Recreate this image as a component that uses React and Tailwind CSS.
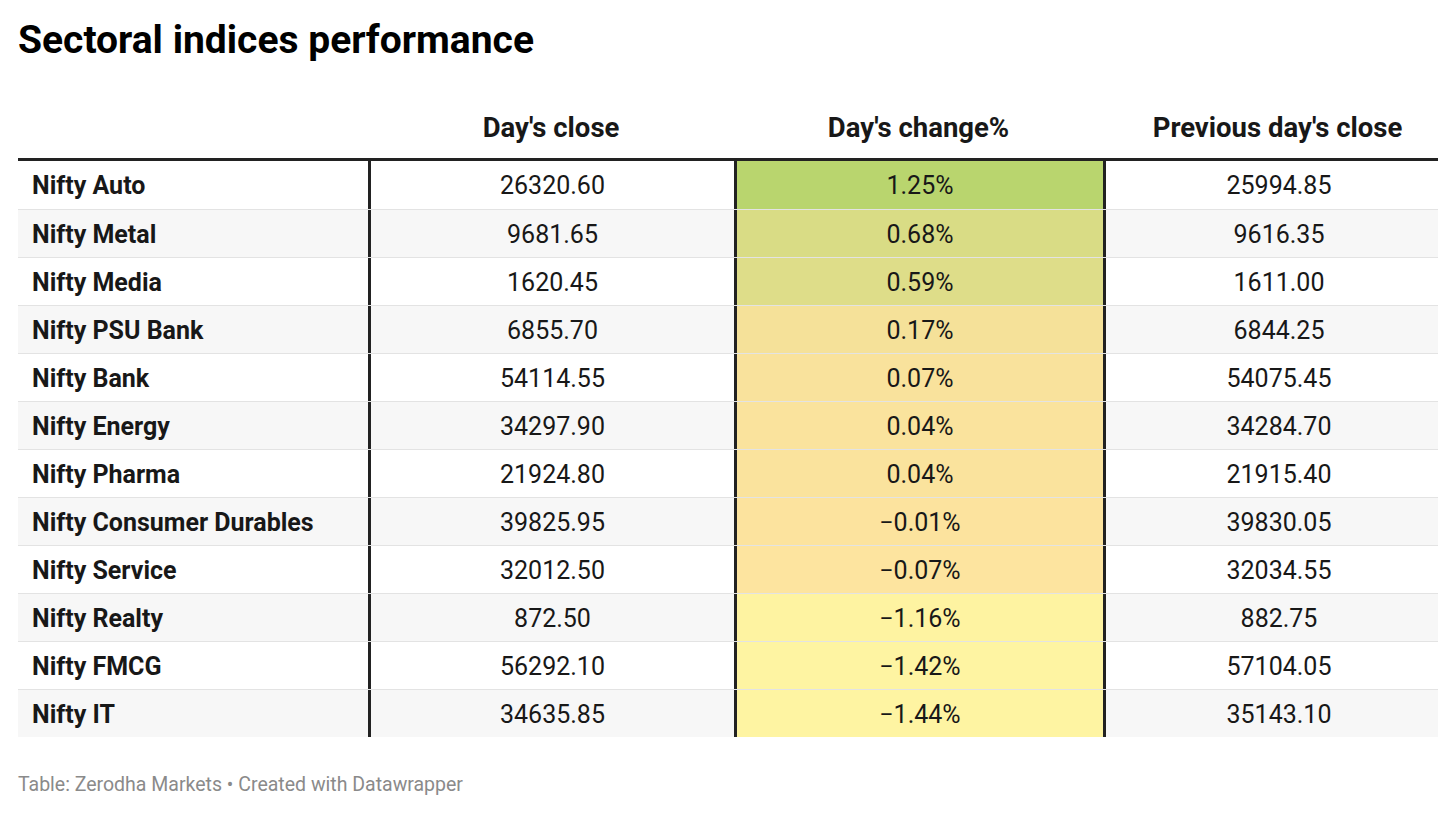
import React from "react";

const rows = [
  { name: "Nifty Auto", close: "26320.60", change: "1.25%", prev: "25994.85", bg: "bg-[#b9d56e]" },
  { name: "Nifty Metal", close: "9681.65", change: "0.68%", prev: "9616.35", bg: "bg-[#d9dc85]" },
  { name: "Nifty Media", close: "1620.45", change: "0.59%", prev: "1611.00", bg: "bg-[#dedd89]" },
  { name: "Nifty PSU Bank", close: "6855.70", change: "0.17%", prev: "6844.25", bg: "bg-[#f5e199]" },
  { name: "Nifty Bank", close: "54114.55", change: "0.07%", prev: "54075.45", bg: "bg-[#f9e29c]" },
  { name: "Nifty Energy", close: "34297.90", change: "0.04%", prev: "34284.70", bg: "bg-[#fae39d]" },
  { name: "Nifty Pharma", close: "21924.80", change: "0.04%", prev: "21915.40", bg: "bg-[#fae39d]" },
  { name: "Nifty Consumer Durables", close: "39825.95", change: "\u22120.01%", prev: "39830.05", bg: "bg-[#fce39e]" },
  { name: "Nifty Service", close: "32012.50", change: "\u22120.07%", prev: "32034.55", bg: "bg-[#fde49f]" },
  { name: "Nifty Realty", close: "872.50", change: "\u22121.16%", prev: "882.75", bg: "bg-[#fef3a1]" },
  { name: "Nifty FMCG", close: "56292.10", change: "\u22121.42%", prev: "57104.05", bg: "bg-[#fef4a2]" },
  { name: "Nifty IT", close: "34635.85", change: "\u22121.44%", prev: "35143.10", bg: "bg-[#fef4a2]" },
];

export default function App() {
  return (
    <div className="w-[1456px] h-[813px] bg-white px-[18px] pt-[20px] text-[#181818] font-['Roboto',sans-serif]">
      <h1 className="text-[39px] leading-[40px] font-bold text-black">Sectoral indices performance</h1>

      {/* header */}
      <div className="flex h-[101px] items-end pb-[14px] border-b-[3px] border-[#222] text-[27.5px] leading-[32px] font-bold">
        <div className="w-[350px]" />
        <div className="w-[366px] text-center">Day's close</div>
        <div className="w-[369px] text-center">Day's change%</div>
        <div className="w-[335px] pl-[14px] text-center">Previous day's close</div>
      </div>

      {/* body */}
      <div>
        {rows.map((r, i) => (
          <div
            key={r.name}
            className={`flex h-[48px] text-[25px] ${i > 0 ? "border-t border-[#e3e3e3]" : ""} ${i % 2 === 1 ? "bg-[#f7f7f7]" : "bg-white"}`}
          >
            <div className="w-[350px] pl-[14px] pt-[2px] flex items-center font-bold">{r.name}</div>
            <div className="w-[366px] border-l-[3px] border-[#222] pt-[2px] flex items-center justify-center">{r.close}</div>
            <div className={`w-[369px] border-l-[3px] border-[#222] pt-[2px] flex items-center justify-center ${r.bg}`}>{r.change}</div>
            <div className="w-[335px] border-l-[3px] border-[#222] pl-[14px] pt-[2px] flex items-center justify-center">{r.prev}</div>
          </div>
        ))}
      </div>

      <div className="mt-[36px] text-[19.5px] leading-[24px] text-[#8a8a8a]">
        Table: Zerodha Markets • Created with Datawrapper
      </div>
    </div>
  );
}
